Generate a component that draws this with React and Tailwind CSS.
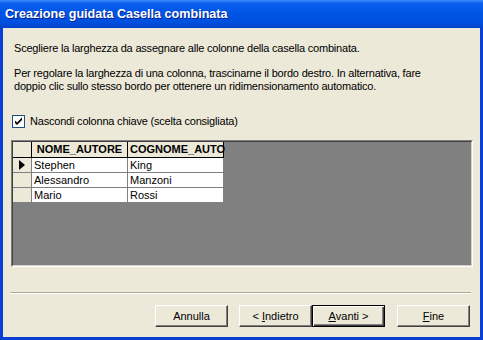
import React from 'react';

const font = { fontFamily: '"Liberation Sans", Arial, sans-serif' };

const rows = [
    ['Stephen', 'King', true],
    ['Alessandro', 'Manzoni', false],
    ['Mario', 'Rossi', false],
];

const Button = ({ children, isDefault }) => (
    <div
        className={
            'w-[73px] h-[22px] flex items-center justify-center text-[11px] text-black bg-[#ECE9D8] whitespace-pre ' +
            (isDefault
                ? 'border border-black shadow-[inset_1px_1px_#fff,inset_-1px_-1px_#404040,inset_-2px_-2px_#808080]'
                : 'border-t border-l border-white border-r border-b border-r-[#404040] border-b-[#404040] shadow-[inset_-1px_-1px_#808080]')
        }
    >
        {children}
    </div>
);

const App = () => {
    return (
        <div className="w-[483px] h-[340px] bg-[#0A3FD6] flex flex-col overflow-hidden" style={font}>
            {/* Title bar */}
            <div className="h-[28px] shrink-0 flex items-center pl-[5px] bg-[linear-gradient(180deg,#3A8CF8_0%,#0A5FEE_12%,#0055E5_45%,#0050DF_80%,#0043C8_100%)]">
                <span className="text-white font-bold text-[12.6px] [text-shadow:1px_1px_#0A1E8C]">
                    Creazione guidata Casella combinata
                </span>
            </div>

            {/* Body */}
            <div className="flex-1 mx-[3px] mb-[3px] bg-[#ECE9D8] flex flex-col pl-[8px] pr-[7px] text-[11px] leading-[13px] text-black">
                <p className="mt-[14px] ml-[3px] tracking-[-0.2px]">Scegliere la larghezza da assegnare alle colonne della casella combinata.</p>
                <p className="mt-[12px] ml-[3px] w-[440px] tracking-[-0.2px]">
                    Per regolare la larghezza di una colonna, trascinarne il bordo destro. In alternativa, fare doppio clic sullo stesso bordo per ottenere un ridimensionamento automatico.
                </p>

                <div className="mt-[22px] ml-[1px] flex items-center h-[13px]">
                    <div className="w-[13px] h-[13px] bg-white border border-[#1C5180] flex items-center justify-center">
                        <svg width="9" height="9" viewBox="0 0 9 9">
                            <path d="M1 3.5 L3 5.5 L8 0.5 L8 3 L3 8 L1 6 Z" fill="#000" />
                        </svg>
                    </div>
                    <span className="ml-[5px] tracking-[-0.2px]">Nascondi colonna chiave (scelta consigliata)</span>
                </div>

                {/* Grid */}
                <div className="mt-[12px] w-[462px] h-[127px] border-t border-l border-[#808080] border-r border-b border-r-white border-b-white">
                    <div className="w-full h-full bg-[#808080] border-t border-l border-[#404040] border-r border-b border-r-[#D4D0C8] border-b-[#D4D0C8]">
                        <div className="flex h-[16px]">
                            <div className="w-[19px] bg-[#ECE9D8] border-r border-b border-black" />
                            <div className="w-[96px] bg-[#ECE9D8] border-r border-b border-black font-bold flex items-center justify-center whitespace-nowrap">
                                NOME_AUTORE
                            </div>
                            <div className="w-[96px] bg-[#ECE9D8] border-r border-b border-black font-bold flex items-center pl-[2px] whitespace-nowrap">
                                COGNOME_AUTO
                            </div>
                        </div>
                        {rows.map(([nome, cognome, current]) => (
                            <div key={nome} className="flex h-[15px]">
                                <div className="w-[19px] bg-[#ECE9D8] border-r border-b border-[#808080] flex items-center justify-center">
                                    {current && (
                                        <svg width="6" height="10" viewBox="0 0 6 10">
                                            <path d="M0 0 L6 5 L0 10 Z" fill="#000" />
                                        </svg>
                                    )}
                                </div>
                                <div className="w-[96px] bg-white border-r border-b border-[#808080] flex items-center pl-[2px]">{nome}</div>
                                <div className="w-[96px] bg-white border-r border-b border-[#808080] flex items-center pl-[2px]">{cognome}</div>
                            </div>
                        ))}
                    </div>
                </div>

                {/* Separator */}
                <div className="mt-[25px] -ml-[1px] w-[461px] border-t border-[#ACA899] border-b border-b-white" />

                {/* Buttons */}
                <div className="mt-[11px] flex items-center">
                    <div className="ml-[144px]">
                        <Button>Annulla</Button>
                    </div>
                    <div className="ml-[11px]">
                        <Button>
                            {'< '}
                            <u>I</u>ndietro
                        </Button>
                    </div>
                    <Button isDefault>
                        <u>A</u>
                        {'vanti >'}
                    </Button>
                    <div className="ml-[12px]">
                        <Button>
                            <u>F</u>ine
                        </Button>
                    </div>
                </div>
            </div>
        </div>
    );
};

export default App;
